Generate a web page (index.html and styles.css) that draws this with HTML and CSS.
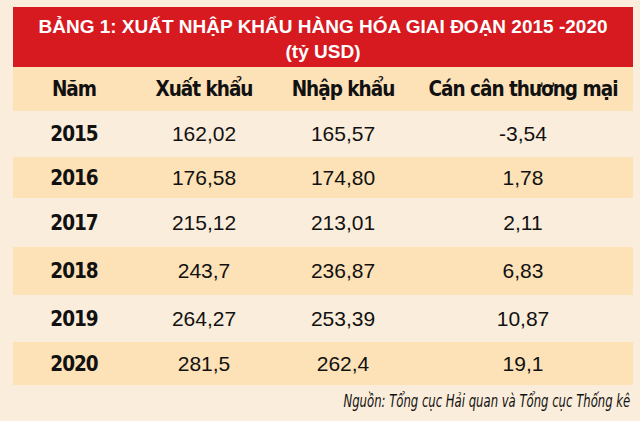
FILE: index.html
```html
<!DOCTYPE html>
<html lang="vi">
<head>
<meta charset="utf-8">
<link rel="stylesheet" href="styles.css">
</head>
<body>
<div class="page">
  <div class="card">
    <div class="title">BẢNG 1: XUẤT NHẬP KHẨU HÀNG HÓA GIAI ĐOẠN 2015 -2020<br>(tỷ USD)</div>
    <table class="data">
      <thead>
        <tr><th class="c1">Năm</th><th class="c2">Xuất khẩu</th><th class="c3">Nhập khẩu</th><th class="c4">Cán cân thương mại</th></tr>
      </thead>
      <tbody>
        <tr><th>2015</th><td>162,02</td><td>165,57</td><td>-3,54</td></tr>
        <tr class="alt"><th>2016</th><td>176,58</td><td>174,80</td><td>1,78</td></tr>
        <tr><th>2017</th><td>215,12</td><td>213,01</td><td>2,11</td></tr>
        <tr class="alt"><th>2018</th><td>243,7</td><td>236,87</td><td>6,83</td></tr>
        <tr><th>2019</th><td>264,27</td><td>253,39</td><td>10,87</td></tr>
        <tr class="alt"><th>2020</th><td>281,5</td><td>262,4</td><td>19,1</td></tr>
      </tbody>
    </table>
  </div>
  <p class="source"><span class="source-text">Nguồn: Tổng cục Hải quan và Tổng cục Thống kê</span></p>
</div>
</body>
</html>
```
FILE: styles.css
```css
html, body {
  margin: 0;
  padding: 0;
}
body {
  background: #fbeddb;
  width: 640px;
  height: 421px;
  overflow: hidden;
  font-family: "DejaVu Sans", sans-serif;
  font-stretch: condensed;
  color: #111;
}
.page {
  padding: 7px 7px 0 13px;
}
.card {
  width: 620px;
}
.title {
  background: #d71920;
  color: #fff;
  height: 60px;
  box-sizing: border-box;
  padding-top: 7px;
  text-align: center;
  font-family: "Liberation Sans", sans-serif;
  font-stretch: normal;
  font-weight: bold;
  font-size: 19px;
  line-height: 25px;
}
.data {
  width: 620px;
  border-collapse: collapse;
  table-layout: fixed;
}
.data th, .data td {
  padding: 0;
  text-align: center;
  vertical-align: middle;
}
.data th {
  font-weight: bold;
  font-size: 20.5px;
  letter-spacing: -1px;
  white-space: nowrap;
}
.data td {
  font-family: "Liberation Sans", sans-serif;
  font-stretch: normal;
  font-size: 21px;
}
.data thead tr {
  background: #fde2b8;
  height: 44px;
}
.c1 { width: 122px; }
.c2 { width: 138px; }
.c3 { width: 140px; }
.c4 { width: 220px; }
.data tbody tr:nth-child(1) { height: 46px; }
.data tbody tr:nth-child(2) { height: 41px; }
.data tbody tr:nth-child(3) { height: 49px; }
.data tbody tr:nth-child(4) { height: 48px; }
.data tbody tr:nth-child(5) { height: 47px; }
.data tbody tr:nth-child(6) { height: 43px; }
.data tr.alt {
  background: #fde2b8;
}
.source {
  margin: 5px 0 0;
  width: 617px;
  text-align: right;
  font-style: italic;
  font-size: 18px;
  line-height: 22px;
}
.source-text {
  display: inline-block;
  transform: scaleX(0.72);
  transform-origin: right center;
}
```
